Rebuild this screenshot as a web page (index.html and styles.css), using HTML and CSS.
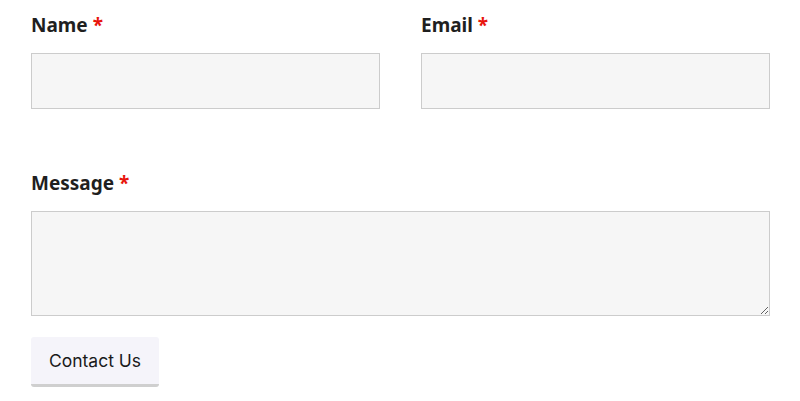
FILE: index.html
```html
<!DOCTYPE html>
<html lang="en">

<head>
  <meta charset="UTF-8">
  <meta name="viewport" content="width=device-width, initial-scale=1.0">
  <title>Contact</title>
  <link rel="stylesheet" href="styles.css">
</head>

<body>
  <form class="contact-form">
    <div class="form-row">
      <div class="form-field">
        <label for="name">Name <span class="required">*</span></label>
        <input type="text" id="name" class="form-control">
      </div>
      <div class="form-field">
        <label for="email">Email <span class="required">*</span></label>
        <input type="email" id="email" class="form-control">
      </div>
    </div>
    <div class="form-field message-field">
      <label for="message">Message <span class="required">*</span></label>
      <textarea id="message" class="form-control form-textarea"></textarea>
    </div>
    <button type="submit" class="submit-btn">Contact Us</button>
  </form>
</body>

</html>
```

FILE: styles.css
```css
body {
  margin: 0;
  background: #fff;
  font-family: "Noto Sans", "Open Sans", sans-serif;
  color: #1f1f1f;
}

.contact-form {
  width: 739px;
  padding: 10px 0 0 31px;
}

.form-row {
  display: grid;
  grid-template-columns: 349px 349px;
  column-gap: 41px;
}

.form-field label {
  display: block;
  font-size: 19px;
  font-weight: 700;
  line-height: 30px;
  margin-bottom: 13px;
}

.required {
  color: #e8150d;
}

.form-control {
  display: block;
  width: 100%;
  height: 56px;
  box-sizing: border-box;
  border: 1px solid #cccccc;
  background: #f6f6f6;
  margin: 0;
  padding: 8px;
  font-family: inherit;
  font-size: 16px;
}

.message-field {
  margin-top: 59px;
}

.form-textarea {
  height: 105px;
  resize: vertical;
}

.submit-btn {
  display: block;
  box-sizing: border-box;
  width: 128px;
  height: 50px;
  margin-top: 21px;
  padding: 0;
  background: #f5f4fa;
  border: none;
  border-bottom: 3px solid #cfcfcf;
  border-radius: 3px;
  font-family: "Inter", "Noto Sans", sans-serif;
  font-size: 17.5px;
  color: #1a1a1a;
  cursor: pointer;
}
```
